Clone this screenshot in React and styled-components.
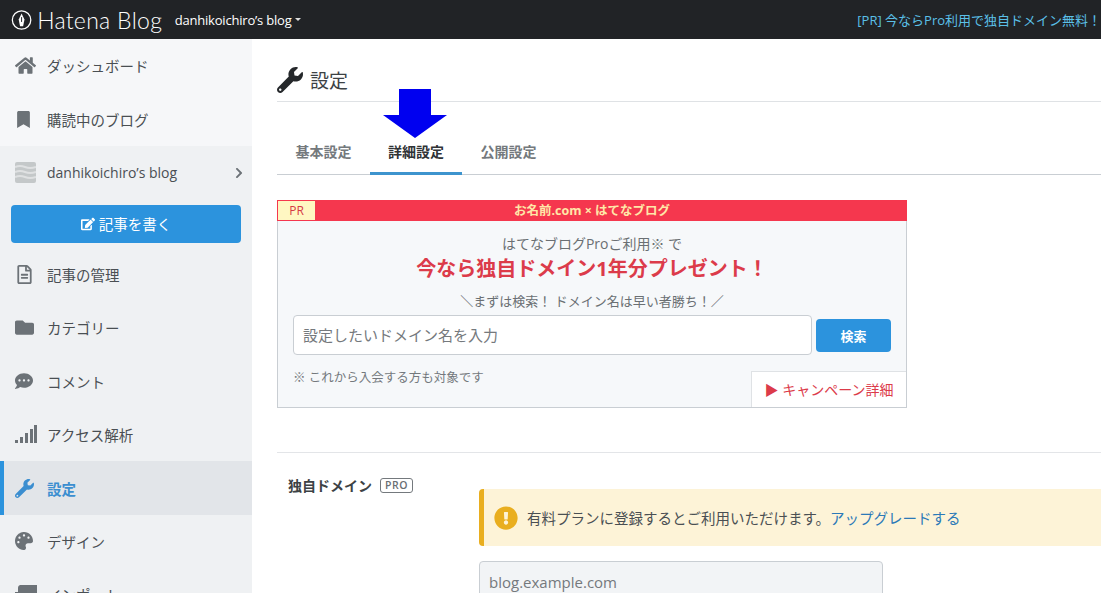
import React from 'react';
import styled, { createGlobalStyle } from 'styled-components';
import {
    FaHome,
    FaBookmark,
    FaChevronRight,
    FaRegFileAlt,
    FaFolder,
    FaCommentDots,
    FaWrench,
    FaPalette,
    FaEdit,
    FaExclamationCircle,
} from 'react-icons/fa';

const GlobalStyle = createGlobalStyle`
    html, body {
        margin: 0;
        height: 593px;
        overflow: hidden;
        background: #fff;
        font-family: "Open Sans", "Noto Sans CJK JP", sans-serif;
        color: #3d4245;
    }
    * { box-sizing: border-box; }
`;

const SignalIcon = () => (
    <svg width="22" height="19" viewBox="0 0 22 19" fill="currentColor">
        <rect x="0" y="15" width="3" height="3" />
        <rect x="5" y="12" width="3" height="6" />
        <rect x="10" y="8" width="3" height="10" />
        <rect x="15" y="4" width="3" height="14" />
        <rect x="19" y="0" width="3" height="18" />
    </svg>
);

const ImportIcon = () => (
    <svg width="22" height="19" viewBox="0 0 22 19" fill="currentColor">
        <path d="M5 0h17v19H5v-3h-2V3a3 3 0 0 1 2-3z" />
        <path d="M0 7h3v12H0z" />
    </svg>
);

const BlogThumb = () => (
    <svg width="21" height="21" viewBox="0 0 21 21">
        <rect width="21" height="21" rx="2" fill="#c4c8c9" />
        <path d="M0 5q5 -2 10 0t11 0M0 10q5 -2 10 0t11 0M0 15q5 -2 10 0t11 0" stroke="#dfe1e2" strokeWidth="2" fill="none" />
    </svg>
);

const LogoMark = () => (
    <svg width="22" height="22" viewBox="0 0 22 22">
        <circle cx="11" cy="11" r="9.6" fill="none" stroke="#fff" strokeWidth="1.3" />
        <path d="M11 4.2l3 6.2-1.4 7H9.4L8 10.4z" fill="#fff" />
        <path d="M11 8v5" stroke="#212326" strokeWidth="1" />
    </svg>
);

const App = () => (
    <Page>
        <GlobalStyle />
        <TopBar>
            <LogoMark />
            <Logo>Hatena Blog</Logo>
            <BlogName>
                danhikoichiro’s blog
                <Caret />
            </BlogName>
            <TopPromo>[PR] 今ならPro利用で独自ドメイン無料！</TopPromo>
        </TopBar>
        <Body>
            <Sidebar>
                <NavItem $tone="light">
                    <NavIcon><FaHome size={21} /></NavIcon>ダッシュボード
                </NavItem>
                <NavItem $tone="light">
                    <NavIcon><FaBookmark size={17} /></NavIcon>購読中のブログ
                </NavItem>
                <BlogRow>
                    <NavIcon><BlogThumb /></NavIcon>
                    <BlogRowName>danhikoichiro’s blog</BlogRowName>
                    <FaChevronRight size={12} color="#6c7277" />
                </BlogRow>
                <WriteWrap>
                    <WriteButton>
                        <FaEdit size={14} />
                        記事を書く
                    </WriteButton>
                </WriteWrap>
                <NavItem>
                    <NavIcon><FaRegFileAlt size={19} /></NavIcon>記事の管理
                </NavItem>
                <NavItem>
                    <NavIcon><FaFolder size={19} /></NavIcon>カテゴリー
                </NavItem>
                <NavItem>
                    <NavIcon><FaCommentDots size={18} /></NavIcon>コメント
                </NavItem>
                <NavItem>
                    <NavIcon><SignalIcon /></NavIcon>アクセス解析
                </NavItem>
                <NavItem $active>
                    <NavIcon><FaWrench size={19} /></NavIcon>設定
                </NavItem>
                <NavItem>
                    <NavIcon><FaPalette size={18} /></NavIcon>デザイン
                </NavItem>
                <NavItem>
                    <NavIcon><ImportIcon /></NavIcon>インポート
                </NavItem>
            </Sidebar>
            <Main>
                <PageTitle>
                    <FaWrench size={26} color="#25282b" />
                    設定
                </PageTitle>
                <Tabs>
                    <Tab>基本設定</Tab>
                    <Tab $active>詳細設定</Tab>
                    <Tab>公開設定</Tab>
                </Tabs>
                <Arrow viewBox="0 0 64 49" width="64" height="49">
                    <path d="M16 0h32v26h16L32 49 0 26h16z" fill="#0000f0" />
                </Arrow>
                <Banner>
                    <BannerHead>
                        <PrBadge>PR</PrBadge>
                        お名前.com × はてなブログ
                    </BannerHead>
                    <BannerBody>
                        <BannerLead>はてなブログProご利用※ で</BannerLead>
                        <BannerTitle>今なら独自ドメイン1年分プレゼント！</BannerTitle>
                        <BannerSub>＼まずは検索！ ドメイン名は早い者勝ち！／</BannerSub>
                        <SearchRow>
                            <SearchInput placeholder="設定したいドメイン名を入力" />
                            <SearchButton>検索</SearchButton>
                        </SearchRow>
                        <BannerNote>※ これから入会する方も対象です</BannerNote>
                        <CampaignLink>▶ キャンペーン詳細</CampaignLink>
                    </BannerBody>
                </Banner>
                <Section>
                    <FieldLabel>
                        独自ドメイン
                        <ProTag>PRO</ProTag>
                    </FieldLabel>
                    <FieldBody>
                        <Notice>
                            <FaExclamationCircle size={24} color="#e9ae1f" />
                            <span>
                                有料プランに登録するとご利用いただけます。
                                <UpgradeLink>アップグレードする</UpgradeLink>
                            </span>
                        </Notice>
                        <DomainInput placeholder="blog.example.com" disabled />
                    </FieldBody>
                </Section>
            </Main>
        </Body>
    </Page>
);

export default App;

const Page = styled.div`
    width: 1101px;
    height: 593px;
    overflow: hidden;
    display: flex;
    flex-direction: column;
`;

const TopBar = styled.header`
    height: 39px;
    flex: none;
    background: #212326;
    color: #fff;
    display: flex;
    align-items: center;
    padding-left: 11px;
    white-space: nowrap;
    overflow: hidden;
`;

const Logo = styled.span`
    font-family: "Lato", sans-serif;
    font-weight: 300;
    font-size: 23px;
    letter-spacing: 0.3px;
    margin-left: 5px;
    width: 143px;
`;

const BlogName = styled.span`
    font-size: 13px;
    display: flex;
    align-items: center;
    letter-spacing: -0.2px;
    width: 710px;
`;

const Caret = styled.i`
    margin-left: 3px;
    border-top: 3px solid #ddd;
    border-left: 3px solid transparent;
    border-right: 3px solid transparent;
`;

const TopPromo = styled.span`
    font-size: 13px;
    color: #5bc0e8;
`;

const Body = styled.div`
    flex: 1;
    display: flex;
    min-height: 0;
`;

const Sidebar = styled.nav`
    width: 252px;
    flex: none;
    background: #eff1f3;
    overflow: hidden;
`;

const NavItem = styled.div`
    height: 53.4px;
    display: flex;
    align-items: center;
    padding-left: ${(p) => (p.$active ? '11px' : '15px')};
    font-size: 14.5px;
    color: ${(p) => (p.$active ? '#3b8ed0' : '#4a4f53')};
    background: ${(p) => (p.$active ? '#e2e5e9' : p.$tone === 'light' ? '#f6f7f9' : 'transparent')};
    border-left: ${(p) => (p.$active ? '4px solid #2c93dd' : 'none')};
    font-weight: ${(p) => (p.$active ? 600 : 400)};

    svg {
        color: ${(p) => (p.$active ? '#3b8ed0' : '#6c7277')};
    }
`;

const NavIcon = styled.span`
    width: 32px;
    flex: none;
    display: flex;
    align-items: center;
    justify-content: flex-start;
`;

const BlogRow = styled.div`
    height: 54px;
    display: flex;
    align-items: center;
    padding: 0 7px 0 15px;
    font-size: 14px;
    color: #4a4f53;
`;

const BlogRowName = styled.span`
    flex: 1;
`;

const WriteWrap = styled.div`
    padding: 5px 11px 5px;
`;

const WriteButton = styled.div`
    height: 38px;
    background: #2c93dd;
    border-radius: 4px;
    color: #fff;
    font-size: 14.5px;
    display: flex;
    align-items: center;
    justify-content: center;
    gap: 4px;
`;

const Main = styled.main`
    flex: 1;
    min-width: 0;
    padding: 0 0 0 25px;
    position: relative;
`;

const PageTitle = styled.h1`
    margin: 0;
    height: 63px;
    padding-top: 20px;
    border-bottom: 1px solid #dfe2e5;
    display: flex;
    align-items: center;
    gap: 7px;
    font-size: 19px;
    font-weight: 400;
    color: #3d4245;
`;

const Tabs = styled.div`
    display: flex;
    height: 73px;
    align-items: flex-end;
    border-bottom: 1px solid #c9ced3;
    padding-left: 0;
`;

const Tab = styled.div`
    width: ${(p) => (p.$active ? '92px' : '93px')};
    height: 48px;
    display: flex;
    align-items: center;
    justify-content: center;
    font-size: 14px;
    font-weight: 700;
    color: ${(p) => (p.$active ? '#2f3336' : '#74797d')};
    border-bottom: ${(p) => (p.$active ? '3px solid #3d94ce' : 'none')};
    margin-bottom: -1px;
    padding-top: ${(p) => (p.$active ? '3px' : '0')};
`;

const Arrow = styled.svg`
    position: absolute;
    left: 131px;
    top: 50px;
`;

const Banner = styled.section`
    width: 630px;
    height: 208px;
    margin-top: 25px;
    border: 1px solid #c9ced3;
    border-top: none;
    background: #f6f8fa;
    display: flex;
    flex-direction: column;
`;

const BannerHead = styled.div`
    height: 21px;
    margin: 0 -1px;
    background: #f5374e;
    color: #ffe7a8;
    font-size: 12.5px;
    font-weight: 700;
    text-align: center;
    line-height: 21px;
    position: relative;
`;

const PrBadge = styled.span`
    position: absolute;
    left: 1px;
    top: 1px;
    width: 37px;
    height: 19px;
    background: #fff7c2;
    color: #d63a45;
    font-size: 12px;
    font-weight: 400;
    line-height: 19px;
    text-align: center;
`;

const BannerBody = styled.div`
    flex: 1;
    padding: 13px 15px 0;
    text-align: center;
    position: relative;
`;

const BannerLead = styled.div`
    font-size: 14px;
    line-height: 20px;
    color: #6a6f73;
`;

const BannerTitle = styled.div`
    font-size: 20px;
    line-height: 30px;
    font-weight: 700;
    color: #dc3b4a;
`;

const BannerSub = styled.div`
    margin-top: 7px;
    font-size: 13px;
    line-height: 20px;
    color: #6a6f73;
`;

const SearchRow = styled.div`
    display: flex;
    align-items: center;
    gap: 4px;
    margin-top: 4px;
`;

const SearchInput = styled.input`
    width: 519px;
    height: 40px;
    border: 1px solid #c9ced3;
    border-radius: 4px;
    padding: 0 9px;
    background: #fff;
    font: 15px "Open Sans", "Noto Sans CJK JP", sans-serif;

    &::placeholder {
        color: #75797d;
        opacity: 1;
    }
`;

const SearchButton = styled.button`
    width: 75px;
    height: 33px;
    border: none;
    border-radius: 4px;
    background: #2c93dd;
    color: #fff;
    font: 700 13px "Open Sans", "Noto Sans CJK JP", sans-serif;
`;

const BannerNote = styled.div`
    margin-top: 13px;
    font-size: 12.5px;
    line-height: 20px;
    color: #74797d;
    text-align: left;
`;

const CampaignLink = styled.div`
    position: absolute;
    right: 0;
    bottom: 0;
    width: 155px;
    height: 36px;
    background: #fff;
    border-left: 1px solid #dfe2e5;
    border-top: 1px solid #dfe2e5;
    color: #dc3b4a;
    font-size: 14px;
    line-height: 36px;
    text-align: center;
`;

const Section = styled.section`
    margin-top: 44px;
    border-top: 1px solid #e3e5e8;
    padding: 23px 0 0 11px;
    display: flex;
`;

const FieldLabel = styled.div`
    width: 191px;
    flex: none;
    display: flex;
    align-items: flex-start;
    gap: 8px;
    font-size: 14px;
    font-weight: 700;
    color: #3d4245;
    line-height: 20px;
`;

const ProTag = styled.span`
    border: 1px solid #74797d;
    border-radius: 3px;
    font-size: 10.5px;
    font-weight: 600;
    line-height: 13px;
    padding: 0 4px;
    margin-top: 2px;
    color: #6a6f73;
    letter-spacing: 0.5px;
`;

const FieldBody = styled.div`
    flex: 1;
    min-width: 0;
    padding-top: 13px;
`;

const Notice = styled.div`
    height: 57px;
    width: 640px;
    background: #fdf3d7;
    border-left: 5px solid #e9ae1f;
    border-radius: 4px 0 0 4px;
    display: flex;
    align-items: center;
    gap: 9px;
    padding-left: 10px;
    font-size: 14.5px;
    color: #4a4f53;
    white-space: nowrap;
`;

const UpgradeLink = styled.a`
    color: #2b79b8;
`;

const DomainInput = styled.input`
    display: block;
    margin-top: 15px;
    width: 404px;
    height: 42px;
    border: 1px solid #c9ced3;
    border-radius: 4px;
    padding: 0 9px;
    background: #f2f4f6;
    font: 15px "Open Sans", "Noto Sans CJK JP", sans-serif;

    &::placeholder {
        color: #75797d;
        opacity: 1;
    }
`;
